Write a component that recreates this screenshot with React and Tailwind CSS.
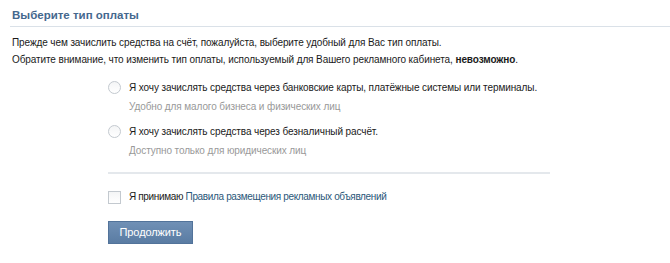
export default function App() {
  const font = { fontFamily: "'Liberation Sans', Arial, sans-serif" };
  return (
    <div className="w-[670px] h-[263px] bg-white overflow-hidden text-[10px] tracking-[-0.1px] text-[#1a1a1a] whitespace-nowrap" style={font}>
      <div className="pl-[10px]">
        <div className="pt-[9px] pl-[2px] pb-[4px] border-b border-[#dae1e8] text-[11.5px] tracking-normal font-bold text-[#45688e] leading-[13px]">
          Выберите тип оплаты
        </div>
      </div>
      <div className="pl-[12px] pt-[7px] leading-[17px]">
        <div>Прежде чем зачислить средства на счёт, пожалуйста, выберите удобный для Вас тип оплаты.</div>
        <div>
          Обратите внимание, что изменить тип оплаты, используемый для Вашего рекламного кабинета,{" "}
          <b>невозможно</b>.
        </div>
      </div>
      <div className="pl-[108px] pt-[14px]">
        <div className="flex items-start gap-[8px]">
          <div className="mt-[-1px] w-[13px] h-[13px] rounded-full border border-[#c3c9cf] bg-gradient-to-b from-[#f4f5f6] to-white shrink-0" />
          <div className="leading-[12px]">
            <div>Я хочу зачислять средства через банковские карты, платёжные системы или терминалы.</div>
            <div className="mt-[7px] text-[#999]">Удобно для малого бизнеса и физических лиц</div>
          </div>
        </div>
        <div className="flex items-start gap-[8px] mt-[13px]">
          <div className="mt-[-1px] w-[13px] h-[13px] rounded-full border border-[#c3c9cf] bg-gradient-to-b from-[#f4f5f6] to-white shrink-0" />
          <div className="leading-[12px]">
            <div>Я хочу зачислять средства через безналичный расчёт.</div>
            <div className="mt-[7px] text-[#999]">Доступно только для юридических лиц</div>
          </div>
        </div>
        <div className="mt-[15px] border-t-2 border-[#e4e8ec] w-[442px]" />
        <div className="flex items-center gap-[8px] mt-[16px]">
          <div className="w-[13px] h-[13px] border border-[#c3c9cf] bg-gradient-to-b from-[#f4f5f6] to-white shrink-0" />
          <div className="leading-[14px] tracking-[-0.35px]">
            Я принимаю <span className="text-[#2b587a]">Правила размещения рекламных объявлений</span>
          </div>
        </div>
        <button className="mt-[17px] w-[85px] h-[23px] border border-[#52739a] bg-gradient-to-b from-[#7090b5] to-[#5a7ca3] text-white text-[11px] leading-[21px] text-center" style={font}>
          Продолжить
        </button>
      </div>
    </div>
  );
}
